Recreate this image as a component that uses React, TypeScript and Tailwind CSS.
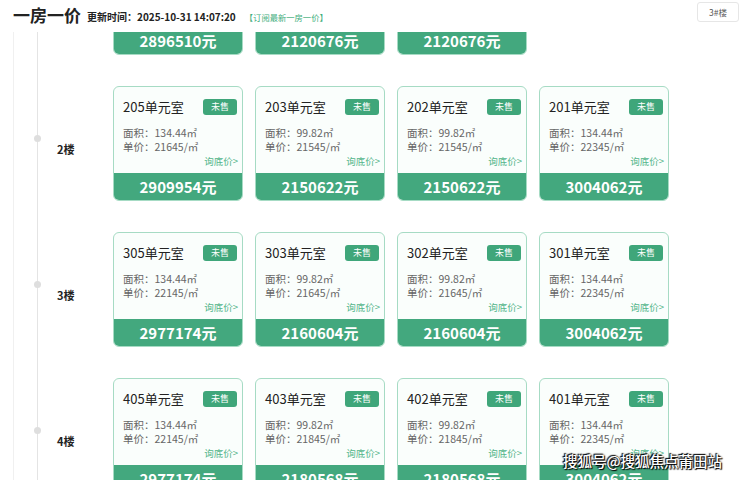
const units: { floor: string; rooms: { no: string; area: string; price: string; total: string }[] }[] = [
  {
    floor: "1楼",
    rooms: [
      { no: "105", area: "134.44", price: "21545", total: "2896510" },
      { no: "103", area: "99.82", price: "21245", total: "2120676" },
      { no: "102", area: "99.82", price: "21245", total: "2120676" },
    ],
  },
  {
    floor: "2楼",
    rooms: [
      { no: "205", area: "134.44", price: "21645", total: "2909954" },
      { no: "203", area: "99.82", price: "21545", total: "2150622" },
      { no: "202", area: "99.82", price: "21545", total: "2150622" },
      { no: "201", area: "134.44", price: "22345", total: "3004062" },
    ],
  },
  {
    floor: "3楼",
    rooms: [
      { no: "305", area: "134.44", price: "22145", total: "2977174" },
      { no: "303", area: "99.82", price: "21645", total: "2160604" },
      { no: "302", area: "99.82", price: "21645", total: "2160604" },
      { no: "301", area: "134.44", price: "22345", total: "3004062" },
    ],
  },
  {
    floor: "4楼",
    rooms: [
      { no: "405", area: "134.44", price: "22145", total: "2977174" },
      { no: "403", area: "99.82", price: "21845", total: "2180568" },
      { no: "402", area: "99.82", price: "21845", total: "2180568" },
      { no: "401", area: "134.44", price: "22345", total: "3004062" },
    ],
  },
];

function RoomCard({ room }: { room: (typeof units)[number]["rooms"][number] }) {
  return (
    <div className="w-[130px] h-[115px] flex flex-col rounded-md border border-[#a6dbc4] bg-[#fafefc] overflow-hidden">
      <div className="flex items-center justify-between pl-[9px] pr-[5px] pt-[12px]">
        <span className="text-[13px] leading-[16px] text-[#222]">{room.no}单元室</span>
        <span className="w-[34px] h-[16px] rounded-[3px] bg-[#3fa67a] text-white text-[9px] leading-[16px] text-center">
          未售
        </span>
      </div>
      <div className="mt-[11px] pl-[9px] text-[10.5px] leading-[14px] text-[#666]">
        <div>面积：{room.area}㎡</div>
        <div>单价：{room.price}/㎡</div>
      </div>
      <div className="pr-[4px] text-right text-[9.5px] leading-[14px] text-[#52b58a]">询底价&gt;</div>
      <div className="mt-auto h-[27px] bg-[#43a87e] text-white text-[15px] font-bold leading-[27px] text-center">
        {room.total}元
      </div>
    </div>
  );
}

export default function App() {
  return (
    <div
      className="relative h-[480px] w-[740px] overflow-hidden bg-white"
      style={{ fontFamily: '"Noto Sans CJK SC", "Noto Sans", sans-serif' }}
    >
      {/* Header */}
      <div className="relative z-10 h-8 bg-white flex items-start pl-[13px] pr-px">
        <h1 className="text-[17px] font-bold leading-[30px] text-[#222]">一房一价</h1>
        <span className="ml-[6px] mt-[2px] text-[10px] font-bold leading-[30px] text-[#222]">
          更新时间：2025-10-31 14:07:20
        </span>
        <span className="ml-[9px] mt-[2px] text-[8.3px] leading-[30px] text-[#3fae7d]">【订阅最新一房一价】</span>
        <div className="ml-auto mt-[2px] h-[20px] w-[42px] rounded-[3px] border border-[#e6e6e6] text-[8.5px] leading-[18px] text-center text-[#555]">
          3#楼
        </div>
      </div>

      {/* Floors */}
      <div className="-mt-[92px] ml-[13px] border-l border-[#f0f0f0]">
        <div className="ml-[23px] border-l border-[#e4e4e4] flex flex-col gap-[31px] pb-10">
          {units.map((row) => (
            <div key={row.floor} className="relative flex">
              <span className="absolute left-[-4px] top-[49px] w-[7px] h-[7px] rounded-full bg-[#dedede]" />
              <div className="w-[75px] pl-[19px] pt-[55px] text-[11px] font-bold leading-[16px] text-[#222]">
                {row.floor}
              </div>
              <div className="flex gap-3">
                {row.rooms.map((room) => (
                  <RoomCard key={room.no} room={room} />
                ))}
              </div>
            </div>
          ))}
        </div>
      </div>

      {/* Watermark */}
      <div className="absolute right-[18px] bottom-[8px] text-[14.5px] font-medium text-white [text-shadow:0_0_2px_#000,1px_1px_1px_#000,-1px_-1px_1px_#000]">
        搜狐号@搜狐焦点莆田站
      </div>
    </div>
  );
}
